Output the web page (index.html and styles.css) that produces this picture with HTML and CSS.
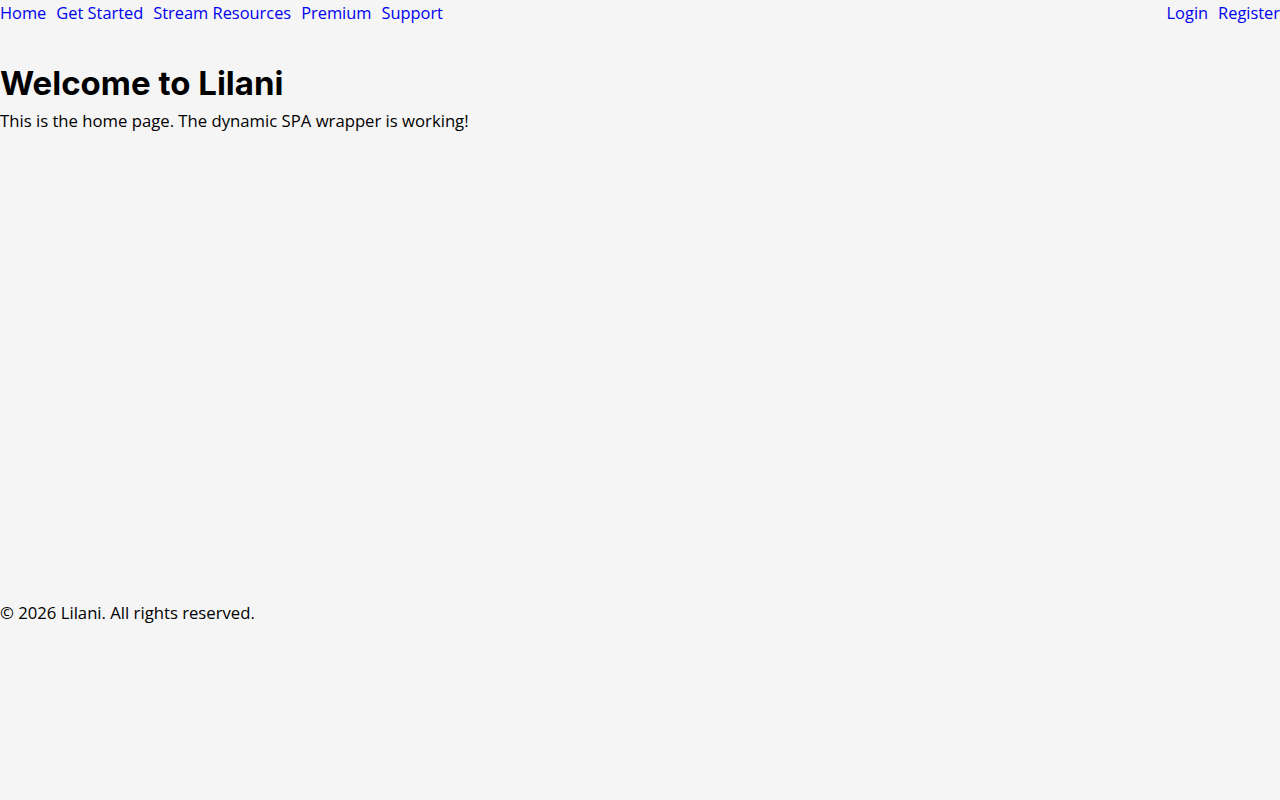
FILE: index.html
```html
<!DOCTYPE html>
<html lang="en">

<head>
    <meta charset="UTF-8">
    <meta name="viewport" content="width=device-width, initial-scale=1.0">
    <title>Lilani</title>
    <link rel="stylesheet" href="styles.css">
</head>

<body>
    <nav class="nav">
        <div class="nav-left">
            <a href="#">Home</a>
            <a href="#">Get Started</a>
            <a href="#">Stream Resources</a>
            <a href="#">Premium</a>
            <a href="#">Support</a>
        </div>
        <div class="nav-right">
            <a href="#">Login</a>
            <a href="#">Register</a>
        </div>
    </nav>

    <main class="main">
        <h1>Welcome to Lilani</h1>
        <p>This is the home page. The dynamic SPA wrapper is working!</p>
    </main>

    <footer class="footer">
        <p>&copy; 2026 Lilani. All rights reserved.</p>
    </footer>
</body>

</html>
```

FILE: styles.css
```css
* {
    margin: 0;
    padding: 0;
    box-sizing: border-box;
}

body {
    background: #f5f5f5;
    color: #000;
    font-family: "Open Sans", "Lato", sans-serif;
    font-size: 16.7px;
    line-height: 1.6;
}

.nav {
    display: flex;
    justify-content: space-between;
    height: 27px;
    font-size: 16.4px;
}

.nav-left,
.nav-right {
    display: flex;
    gap: 10px;
}

.nav a {
    color: #0000ee;
    text-decoration: none;
}

.main {
    min-height: 573px;
    padding-top: 37px;
}

.main h1 {
    font-family: "Inter", sans-serif;
    font-size: 33px;
    font-weight: 700;
    line-height: 1.2;
    margin-bottom: 4px;
}
```
